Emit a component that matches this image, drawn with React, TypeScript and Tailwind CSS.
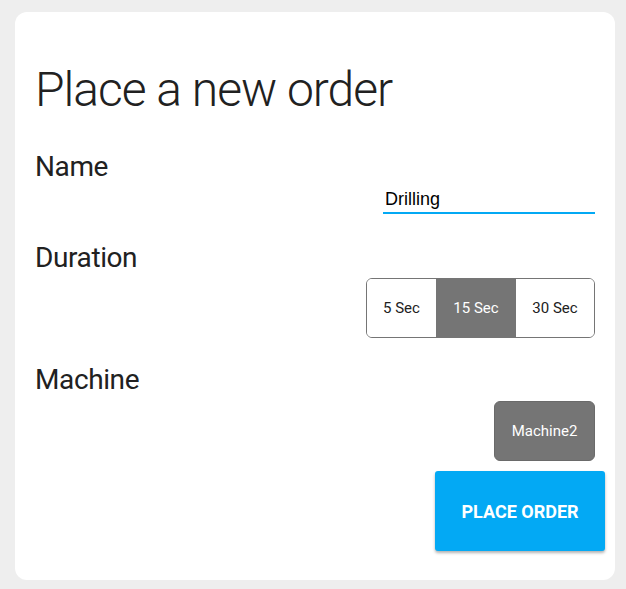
import { useState } from "react";

const durations = ["5 Sec", "15 Sec", "30 Sec"];

export default function App() {
  const [name, setName] = useState("Drilling");
  const [duration, setDuration] = useState("15 Sec");

  return (
    <div className="min-h-screen bg-[#eeeeee] pt-[12px] pr-[11px] pb-[9px] pl-[15px] font-['Roboto',sans-serif] text-[#212121]">
      <div className="rounded-[12px] bg-white pt-[54px] pr-[10px] pb-[29px] pl-[20px]">
        <h1 className="text-[48px] leading-[48px] font-light tracking-[-1px]">Place a new order</h1>

        <div className="mt-[37px] pr-[10px]">
          <div className="text-[28px] leading-[32px] tracking-[-0.4px]">Name</div>
          <div className="mt-[5px] flex justify-end">
            <input
              value={name}
              onChange={(e) => setName(e.target.value)}
              className="w-[212px] border-b-2 border-[#03a9f4] px-[2px] pb-[2px] font-['Liberation_Sans',sans-serif] text-[18px] leading-[22px] text-black outline-none"
            />
          </div>
        </div>

        <div className="mt-[28px] pr-[10px]">
          <div className="text-[28px] leading-[32px] tracking-[-0.4px]">Duration</div>
          <div className="mt-[4px] flex justify-end">
            <div className="flex h-[60px] overflow-hidden rounded-[6px] border border-[#757575]">
              {durations.map((d, i) => (
                <button
                  key={d}
                  onClick={() => setDuration(d)}
                  className={
                    (i === 0 ? "w-[69px] " : "w-[79px] ") +
                    (i > 0 ? "border-l border-[#757575] " : "") +
                    (duration === d ? "bg-[#757575] text-white " : "bg-white text-[#212121] ") +
                    "text-[15px]"
                  }
                >
                  {d}
                </button>
              ))}
            </div>
          </div>
        </div>

        <div className="mt-[26px] pr-[10px]">
          <div className="text-[28px] leading-[32px] tracking-[-0.4px]">Machine</div>
          <div className="mt-[5px] flex justify-end">
            <button className="h-[60px] w-[101px] rounded-[6px] border border-[#6a6a6a] bg-[#757575] text-[15px] text-white">
              Machine2
            </button>
          </div>
        </div>

        <div className="mt-[10px] flex justify-end">
          <button className="h-[80px] w-[170px] rounded-[3px] bg-[#03a9f4] text-[18px] font-bold text-white shadow-[0_2px_3px_rgba(0,0,0,0.3)]">
            PLACE ORDER
          </button>
        </div>
      </div>
    </div>
  );
}
